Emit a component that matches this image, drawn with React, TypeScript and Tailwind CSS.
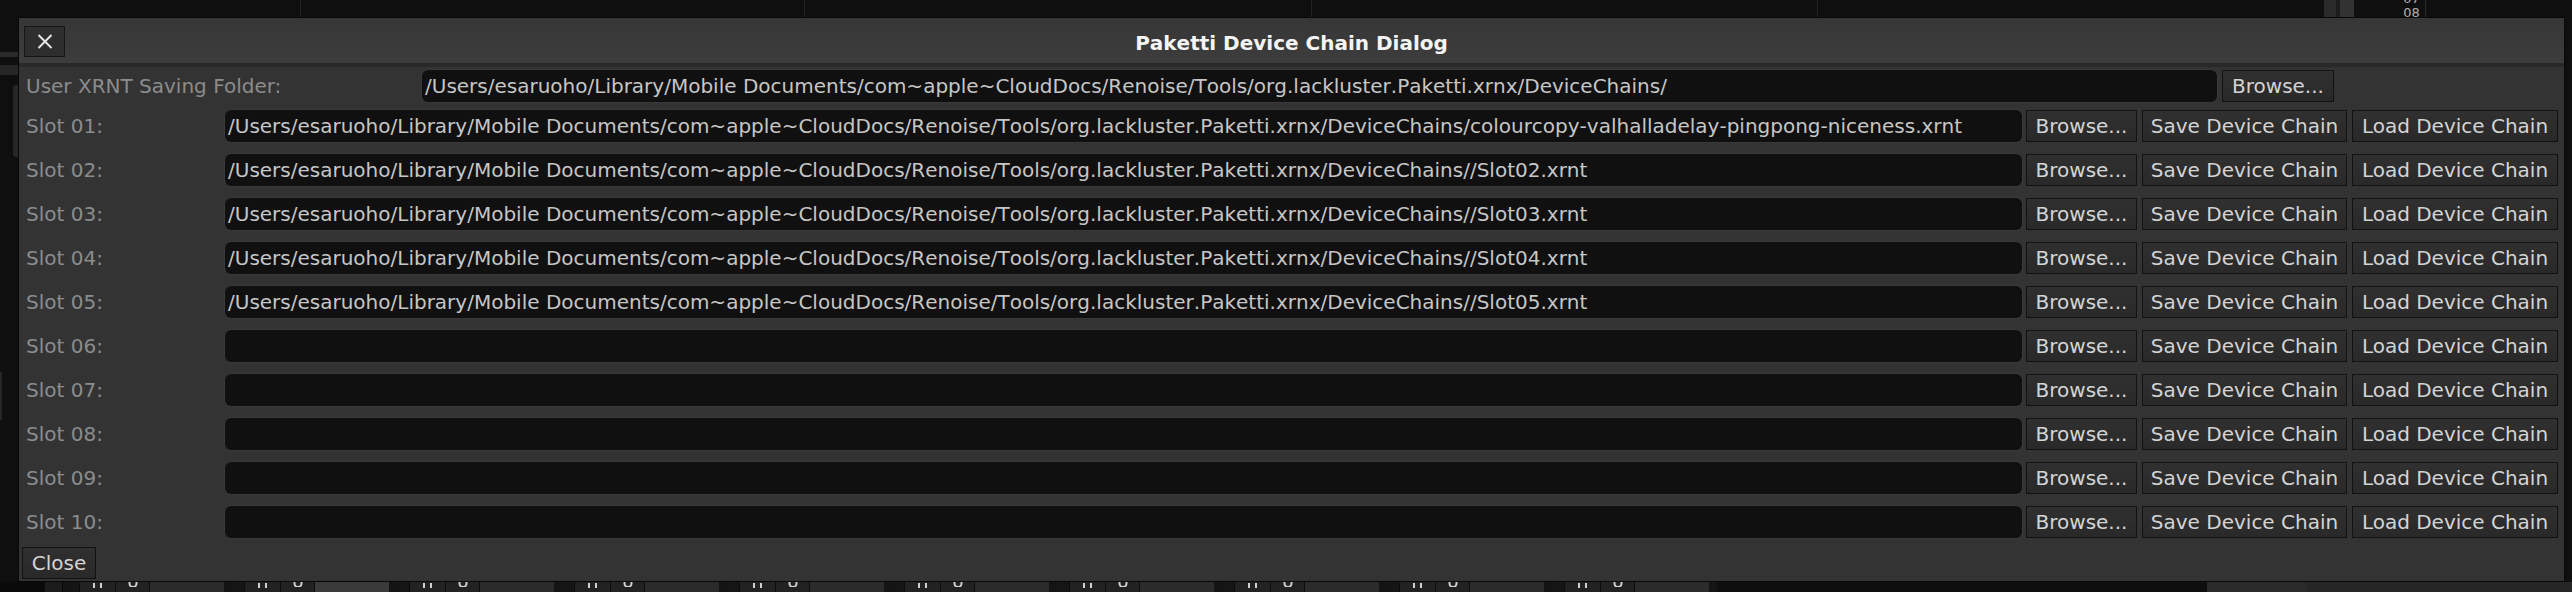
import React from "react";

const base =
  "/Users/esaruoho/Library/Mobile Documents/com~apple~CloudDocs/Renoise/Tools/org.lackluster.Paketti.xrnx/DeviceChains/";

const slots: string[] = [
  base + "colourcopy-valhalladelay-pingpong-niceness.xrnt",
  base + "/Slot02.xrnt",
  base + "/Slot03.xrnt",
  base + "/Slot04.xrnt",
  base + "/Slot05.xrnt",
  "",
  "",
  "",
  "",
  "",
];

function Btn({ className, children }: { className: string; children: React.ReactNode }) {
  return (
    <div
      className={
        "flex h-[32px] shrink-0 items-center justify-center whitespace-nowrap border border-[#121212] bg-linear-to-b from-[#303030] to-[#292929] text-[20px] leading-none text-[#d4d4d4] " +
        className
      }
    >
      {children}
    </div>
  );
}

function Field({ className, text }: { className: string; text: string }) {
  return (
    <div
      className={
        "flex h-[32px] shrink-0 items-center overflow-hidden whitespace-nowrap rounded-[6px] bg-[#101010] pl-[3px] text-[20px] leading-none text-[#c6c6c6] shadow-[0_0_0_1px_#393939] [font-kerning:none] " +
        className
      }
    >
      {text}
    </div>
  );
}

function TrackGroup({ light }: { light?: boolean }) {
  return (
    <div className="flex h-full w-[165px] shrink-0">
      <div className="w-[12px] bg-[#151515]" />
      <div className="flex w-[37px] items-start justify-center gap-[5px] border-x border-[#0c0c0c] bg-[#222222] pt-[1px]">
        <div className="h-[5px] w-[2px] bg-[#d0d0d0]" />
        <div className="h-[5px] w-[2px] bg-[#d0d0d0]" />
      </div>
      <div className="flex w-[34px] items-start justify-center border-r border-[#0c0c0c] bg-[#222222]">
        <svg width="10" height="5" viewBox="0 0 10 5">
          <path d="M1.5 0 V1.5 A3.5 3.5 0 0 0 8.5 1.5 V0" fill="none" stroke="#d0d0d0" strokeWidth="2" />
        </svg>
      </div>
      <div className={light ? "w-[74px] bg-[#3a3a3a]" : "w-[74px] bg-[#2b2b2b]"} />
      <div className="w-[8px] bg-[#141414]" />
    </div>
  );
}

export default function App() {
  return (
    <div className="relative h-[592px] w-[2572px] overflow-hidden bg-[#0f0f0f] font-['DejaVu_Sans',sans-serif]">
      {/* Background application */}
      <div className="flex h-full flex-col">
        {/* top strip */}
        <div className="flex h-[17px] shrink-0">
          <div className="w-[300px] shrink-0" />
          <div className="w-px shrink-0 bg-[#232323]" />
          <div className="w-[503px] shrink-0" />
          <div className="w-px shrink-0 bg-[#232323]" />
          <div className="w-[506px] shrink-0" />
          <div className="w-px shrink-0 bg-[#232323]" />
          <div className="w-[505px] shrink-0" />
          <div className="w-px shrink-0 bg-[#232323]" />
          <div className="w-[506px] shrink-0" />
          <div className="w-[12px] shrink-0 bg-[#2a2a2a]" />
          <div className="w-[4px] shrink-0 bg-[#1d1d1d]" />
          <div className="w-[14px] shrink-0 bg-[#323232]" />
          <div className="w-[44px] shrink-0" />
          <div className="flex w-[27px] shrink-0 flex-col items-center text-[13px] leading-[14px] text-[#b0b0b0]">
            <div className="-mt-[8px]">07</div>
            <div>08</div>
          </div>
          <div className="w-px shrink-0 bg-[#2a2a2a]" />
          <div className="flex-1" />
        </div>
        {/* middle */}
        <div className="flex flex-1">
          <div className="flex w-[18px] shrink-0 flex-col">
            <div className="h-[35px]" />
            <div className="h-[5px] bg-[#2a2a2a]" />
            <div className="h-[8px]" />
            <div className="h-[10px] bg-[#262626]" />
            <div className="h-[10px]" />
            <div className="ml-[13px] h-[72px] w-[5px] rounded-l-[3px] bg-[#262626]" />
            <div className="h-[215px]" />
            <div className="h-[48px] w-[2px] bg-[#262626]" />
          </div>
          <div className="flex-1" />
        </div>
        {/* bottom strip */}
        <div className="flex h-[10px] shrink-0">
          <div className="w-[45px] shrink-0 bg-[#0a0a0a]" />
          <div className="w-[18px] shrink-0 border-r border-[#0a0a0a] bg-[#1c1c1c]" />
          <div className="w-[4px] shrink-0 bg-[#141414]" />
          <TrackGroup />
          <TrackGroup light />
          <TrackGroup />
          <TrackGroup />
          <TrackGroup />
          <TrackGroup />
          <TrackGroup />
          <TrackGroup />
          <TrackGroup />
          <TrackGroup />
          <div className="w-[490px] shrink-0 bg-[#0e0e0e]" />
          <div className="w-[100px] shrink-0 bg-[#2a2a2a]" />
          <div className="flex-1 bg-[#262626]" />
        </div>
      </div>

      {/* Dialog */}
      <div className="absolute left-[18px] top-[17px] flex h-[565px] w-[2547px] flex-col border border-[#080808] bg-[#333333]">
        {/* title bar */}
        <div className="grid h-[45px] shrink-0 grid-cols-[1fr_auto_1fr] bg-linear-to-b from-[#363636] to-[#3d3d3d]">
          <div className="flex items-start pl-[5px] pt-[8px]">
            <div className="flex h-[31px] w-[41px] items-center justify-center border border-[#161616] bg-[#2e2e2e]">
              <svg width="16" height="15" viewBox="0 0 16 15">
                <path d="M1.5 1 L14.5 14 M14.5 1 L1.5 14" stroke="#e6e6e6" strokeWidth="2" fill="none" />
              </svg>
            </div>
          </div>
          <div className="flex items-center pt-[4px] text-[20px] font-bold leading-none text-[#f4f4f4] [font-kerning:none]">
            Paketti Device Chain Dialog
          </div>
          <div />
        </div>
        <div className="h-[4px] shrink-0 bg-[#292929]" />

        {/* content */}
        <div className="flex flex-1 flex-col pl-[3px] pt-[3px]">
          <div className="flex h-[32px] items-center pl-[4px]">
            <div className="w-[396px] shrink-0 text-[20px] leading-none text-[#8c8c8c]">
              User XRNT Saving Folder:
            </div>
            <Field className="w-[1795px]" text={base} />
            <Btn className="ml-[5px] w-[112px]">Browse...</Btn>
          </div>

          <div className="mt-[8px] flex flex-col gap-[12px] pl-[4px]">
            {slots.map((s, i) => (
              <div key={i} className="flex h-[32px] items-center">
                <div className="w-[199px] shrink-0 text-[20px] leading-none text-[#8c8c8c]">
                  {"Slot " + String(i + 1).padStart(2, "0") + ":"}
                </div>
                <Field className="w-[1797px]" text={s} />
                <Btn className="ml-[4px] w-[111px]">Browse...</Btn>
                <Btn className="ml-[5px] w-[205px]">Save Device Chain</Btn>
                <Btn className="ml-[5px] w-[206px]">Load Device Chain</Btn>
              </div>
            ))}
          </div>

          <div className="mt-[9px] flex">
            <Btn className="h-[31px] w-[74px]">Close</Btn>
          </div>
        </div>
      </div>
    </div>
  );
}
